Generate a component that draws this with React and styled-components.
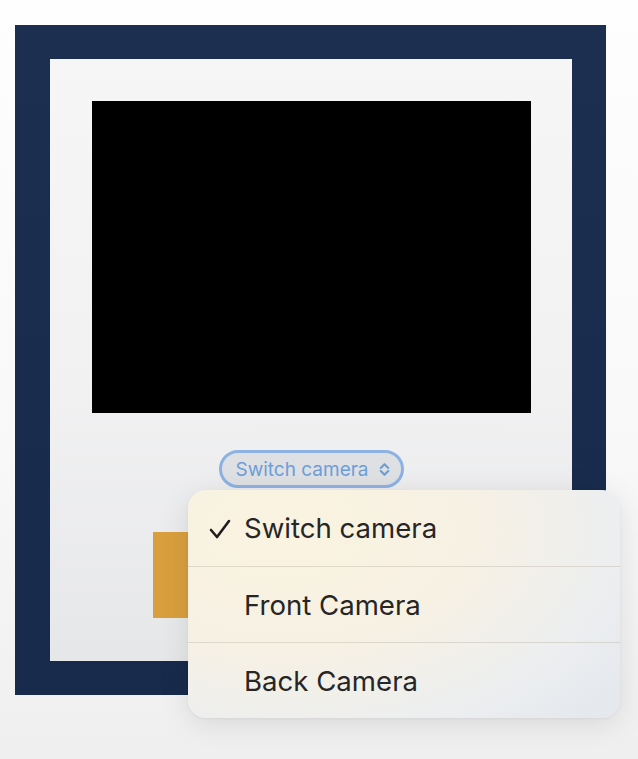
import React from 'react'
import styled, { createGlobalStyle } from 'styled-components'

const GlobalStyle = createGlobalStyle`
    html, body {
        margin: 0;
        padding: 0;
    }
    body {
        width: 638px;
        height: 759px;
        overflow: hidden;
        background: linear-gradient(180deg, #fefefe 0%, #f8f8f8 60%, #efefef 100%);
        font-family: 'Inter', 'Liberation Sans', sans-serif;
    }
`

const Page = styled.main`
    position: relative;
    height: 759px;
    padding: 25px 0 0 15px;
    box-sizing: border-box;
`

const Frame = styled.section`
    width: 591px;
    height: 670px;
    box-sizing: border-box;
    padding: 34px 34px 34px 35px;
    background: linear-gradient(180deg, #1c2f50 0%, #172a4b 100%);
`

const Panel = styled.div`
    height: 100%;
    box-sizing: border-box;
    padding: 42px 41px 0 42px;
    display: flex;
    flex-direction: column;
    align-items: center;
    background: linear-gradient(180deg, #f6f6f7 0%, #f1f1f2 55%, #e6e7e9 100%);
`

const Video = styled.div`
    width: 100%;
    height: 312px;
    background: #000;
`

const Pill = styled.button`
    margin-top: 37px;
    height: 38px;
    padding: 0 10px 0 13px;
    display: flex;
    align-items: center;
    gap: 9px;
    border: 3px solid #8cb2e4;
    border-radius: 19px;
    background: #dfe0e3;
    color: #6d9ed9;
    font-family: 'Inter', 'Liberation Sans', sans-serif;
    font-size: 19px;
    box-sizing: border-box;
`

const Capture = styled.div`
    margin-top: 44px;
    width: 318px;
    height: 86px;
    background: #d99f3e;
`

const Menu = styled.ul`
    position: absolute;
    left: 188px;
    top: 490px;
    width: 432px;
    margin: 0;
    padding: 0;
    list-style: none;
    border-radius: 18px;
    overflow: hidden;
    background: radial-gradient(ellipse 420px 260px at 22% 18%, #faf3e0 0%, #f7f1e4 45%, #eceef0 80%, #e5e8ed 100%);
    box-shadow: 0 6px 30px rgba(0, 0, 0, 0.10), 0 1px 3px rgba(0, 0, 0, 0.05);
`

const Item = styled.li`
    position: relative;
    height: 76px;
    display: flex;
    align-items: center;
    padding-left: 56px;
    font-size: 27.6px;
    color: #262626;
    border-top: ${p => (p.$first ? 'none' : '1.5px solid rgba(190, 185, 170, 0.45)')};
    box-sizing: border-box;
`

const Check = styled.svg`
    position: absolute;
    left: 21px;
    top: 50%;
    margin-top: -9px;
    width: 22px;
    height: 20px;
`

function Chevrons() {
    return (
        <svg width="13" height="15" viewBox="0 0 12 14" fill="none" stroke="#6d9ed9" strokeWidth="2" strokeLinecap="round" strokeLinejoin="round">
            <path d="M2.5 5.5 L6 2 L9.5 5.5" />
            <path d="M2.5 8.5 L6 12 L9.5 8.5" />
        </svg>
    )
}

const options = ['Switch camera', 'Front Camera', 'Back Camera']

export default function App() {
    return (
        <Page>
            <GlobalStyle />
            <Frame>
                <Panel>
                    <Video />
                    <Pill>Switch camera <Chevrons /></Pill>
                    <Capture />
                </Panel>
            </Frame>
            <Menu>
                {options.map((label, i) => (
                    <Item key={label} $first={i === 0}>
                        {i === 0 && (
                            <Check viewBox="0 0 22 20" fill="none" stroke="#1f1f1f" strokeWidth="2.6" strokeLinecap="round" strokeLinejoin="round">
                                <path d="M2 11 L8 18 L20 2" />
                            </Check>
                        )}
                        {label}
                    </Item>
                ))}
            </Menu>
        </Page>
    )
}
